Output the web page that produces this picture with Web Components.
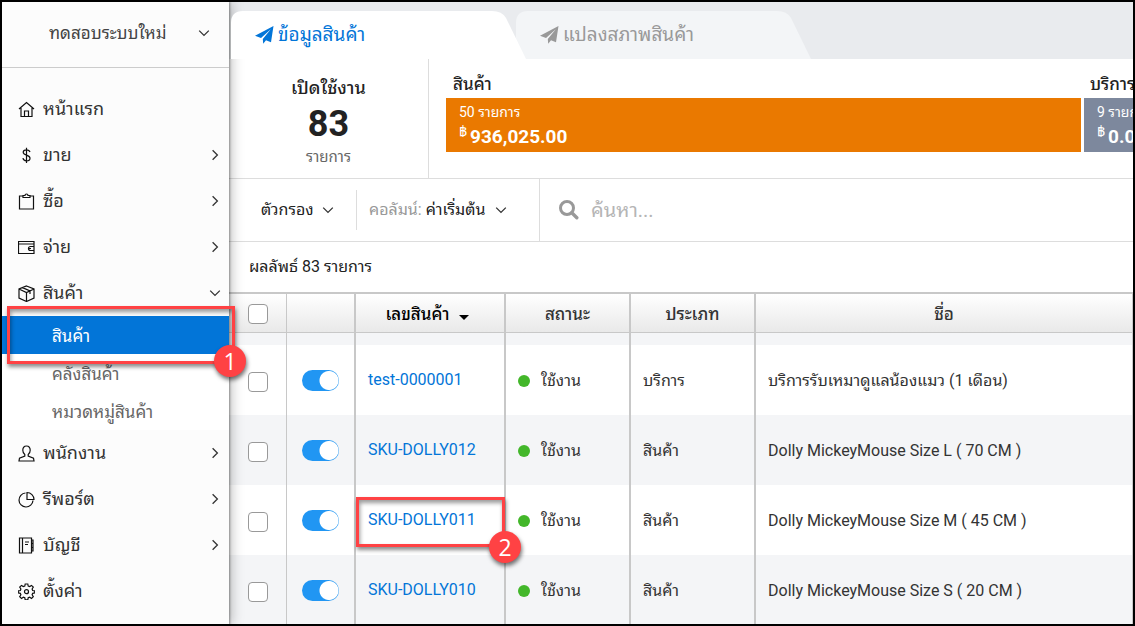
<!DOCTYPE html>
<html lang="th">
<head>
<meta charset="utf-8">
<title>ข้อมูลสินค้า</title>
<style>
html, body { margin: 0; }
body { font-family: Roboto, "Noto Sans Thai Looped", Loma, Waree, Tahoma, "Noto Sans Thai", sans-serif; font-size: 16px; line-height: 20px; color: #333; }
</style>
</head>
<body>
<product-app></product-app>
<script>
const define = (name, html, setup) => {
  const template = document.createElement('template');
  template.innerHTML = '<style>*{box-sizing:border-box}</style>' + html;
  customElements.define(name, class extends HTMLElement {
    connectedCallback() {
      if (this.shadowRoot) return;
      this.attachShadow({ mode: 'open' }).append(template.content.cloneNode(true));
      if (setup) setup(this, this.shadowRoot);
    }
  });
};

const ICONS = {
  home: '<path d="M1 8 8.500 1.500 16 8M3 7v8.500h11V7M6.500 15.500V10h4v5.500"/>',
  dollar: '<path d="M12 5C11.500 3.500 10.200 2.800 8.500 2.800 6.500 2.800 5.200 3.800 5.200 5.300 5.200 8.800 12 7.500 12 11.200 12 12.800 10.500 13.800 8.500 13.800 6.500 13.800 5.200 12.900 4.900 11.200M8.500 .8v15.200"/>',
  clipboard: '<path d="M5 3H1.500v13h14V3H12M5 4.500V2.500h2C7 .5 10 .5 10 2.500h2v2z"/>',
  wallet: '<path d="M.5 14.500v-12h15.500v12zM.5 5h15.500M16 7.500h-3.500a2 2 0 0 0-2 2h2.500M10.500 9.500a2 2 0 0 0 2 2H16"/>',
  box: '<path d="M8.500 1 16 4v9l-7.500 3.500L1 13V4zM1 4l7.500 3.500L16 4M8.500 7.500v9M4.500 2.600 12 6v3"/>',
  user: '<path d="M8.500 1C5.800 1 4.800 3 4.800 5.200c0 2 1 3.500 2 4.300v1.500L1.500 13.200 1 16h15l-.5-2.800-5.300-2.200V9.500c1-.8 2-2.300 2-4.300C12.200 3 11.200 1 8.500 1z"/>',
  pie: '<path d="M7.500 2a7 7 0 1 0 7.500 7.500M9 1.500a7 7 0 0 1 7 7H9z"/>',
  book: '<path d="M1.500 1h12v15h-12zM4.500 1v15M7 5h4M7 7.500h3M13.500 3H15v11h-1.500M13.500 6.500H15M13.500 10.500H15"/>',
  gear: '<path d="M7.200 1h2.600l.4 2 1.500.6 1.800-1.200 1.800 1.800-1.200 1.800.6 1.500 2 .4v2l-2 .4-.6 1.500 1.200 1.800-1.800 1.800-1.800-1.200-1.500.6-.4 2H7.200l-.4-2-1.500-.6-1.800 1.200-1.800-1.800 1.200-1.800-.6-1.500-2-.4v-2l2-.4.600-1.500L1.700 4.200l1.800-1.800 1.800 1.200 1.500-.6z"/><circle cx="8.500" cy="8.700" r="2"/>',
};

define('ui-icon', `
<style>:host{display:block;flex:none;width:17px;height:17px}svg{display:block;width:100%;height:100%;fill:none;stroke:#111;stroke-width:1.2}</style>
<svg viewBox="0 0 17 17" aria-hidden="true"></svg>`,
(host, root) => { root.querySelector('svg').innerHTML = ICONS[host.getAttribute('name')]; });

define('ui-chevron', `
<style>:host{display:block;flex:none;width:12px;height:12px}:host([dir=right]) svg{transform:rotate(-90deg)}svg{display:block;fill:none;stroke:#333;stroke-width:1.3}</style>
<svg width="12" height="12" viewBox="0 0 12 12" aria-hidden="true"><path d="M1.200 3.600 6 8.400l4.800-4.800"/></svg>`);

define('nav-item', `
<style>
:host{display:block}
a{display:flex;align-items:center;height:46px;padding:0 8px 0 16px;gap:8px;color:#333;text-decoration:none;font-size:18px;line-height:24px}
span{flex:1}
</style>
<a href="#"><span><slot></slot></span></a>`,
(host, root) => {
  const icon = document.createElement('ui-icon');
  icon.setAttribute('name', host.getAttribute('icon'));
  root.querySelector('a').prepend(icon);
  const arrow = host.getAttribute('arrow');
  if (arrow) {
    const c = document.createElement('ui-chevron');
    c.setAttribute('dir', arrow);
    root.querySelector('a').append(c);
  }
});

define('nav-subitem', `
<style>
:host{display:block}
a{display:block;height:38px;padding:10px 0 8px 50px;background:#fff;color:#666;text-decoration:none;font-size:17px;line-height:20px}
:host([active]) a{background:#0275d8;color:#fff}
</style>
<a href="#"><slot></slot></a>`);

define('side-nav', `
<style>
:host{display:block;position:relative;z-index:1;background:#fcfcfc;box-shadow:1px 0 2px rgba(0,0,0,.35),2px 0 12px rgba(0,0,0,.28)}
button{display:flex;align-items:center;justify-content:space-between;width:100%;height:66px;padding:0 19px 4px 47px;border:0;border-bottom:1px solid #ccc;background:none;font:inherit;font-size:17px;color:#444}
nav{padding-top:18px}
</style>
<button type="button"><span>ทดสอบระบบใหม่</span><ui-chevron></ui-chevron></button>
<nav>
<nav-item icon="home">หน้าแรก</nav-item>
<nav-item icon="dollar" arrow="right">ขาย</nav-item>
<nav-item icon="clipboard" arrow="right">ซื้อ</nav-item>
<nav-item icon="wallet" arrow="right">จ่าย</nav-item>
<nav-item icon="box" arrow="down">สินค้า</nav-item>
<nav-subitem active>สินค้า</nav-subitem>
<nav-subitem>คลังสินค้า</nav-subitem>
<nav-subitem>หมวดหมู่สินค้า</nav-subitem>
<nav-item icon="user" arrow="right">พนักงาน</nav-item>
<nav-item icon="pie" arrow="right">รีพอร์ต</nav-item>
<nav-item icon="book" arrow="right">บัญชี</nav-item>
<nav-item icon="gear">ตั้งค่า</nav-item>
</nav>`);

define('page-tab', `
<style>
:host{display:grid;width:295px;height:48px;margin-right:-10px;color:#999;--fill:#f3f5f7}
:host([active]){color:#0275d8;--fill:#fff;position:relative;z-index:1}
.shape,a{grid-area:1/1}
.shape{fill:var(--fill)}
a{z-index:1;display:flex;align-items:center;gap:4px;padding-left:24px;color:inherit;text-decoration:none;font-size:19px;line-height:24px}
a svg{fill:currentColor}
</style>
<svg class="shape" width="295" height="48" aria-hidden="true"><path d="M0 48V12Q0 0 12 0H261Q271 0 275 7L295 48z"/></svg>
<a href="#"><svg width="19" height="18" viewBox="0 0 19 18" aria-hidden="true"><path d="M18.500 0 16 16.300l-5-2.100-2.800 3.500-.4-4.800L15.800 3.200 6 12.100 0 9.700z"/></svg><slot></slot></a>`);

define('stat-bar', `
<style>
:host{display:block;min-width:0;overflow:hidden;white-space:nowrap}
h3{margin:0;padding:0 0 4px 7px;font-size:17px;line-height:20px;font-weight:500;color:#222}
:host([tone=gray]) h3{padding-left:6px}
.bar{height:54px;padding:4px 13px;background:#ea7900;color:#fff}
:host([tone=gray]) .bar{background:#7d889d}
.count{font-size:14px;line-height:20px}
.sum{display:flex;gap:3px;line-height:26px}
sup{font-size:14px;line-height:18px;vertical-align:top}
strong{font-size:19px;line-height:30px}
</style>
<h3></h3>
<div class="bar"><div class="count"></div><div class="sum"><sup>฿</sup><strong></strong></div></div>`,
(host, root) => {
  root.querySelector('h3').textContent = host.getAttribute('name');
  root.querySelector('.count').textContent = host.getAttribute('count');
  root.querySelector('strong').textContent = host.getAttribute('sum');
});

define('stats-panel', `
<style>
:host{display:flex;height:120px;border-bottom:1px solid #ddd;background:#fff}
.total{flex:none;width:200px;border-right:1px solid #ddd;padding-top:18px;text-align:center;color:#222}
.total div{font-size:18px;line-height:22px;font-weight:500}
.total strong{display:block;font-size:36px;line-height:50px}
.total small{display:block;font-size:15px;line-height:16px;color:#666}
.bars{flex:1;min-width:0;display:flex;gap:3px;padding:15px 0 0 17px}
.goods{flex:1}.service{flex:none;width:49px}
</style>
<div class="total"><div>เปิดใช้งาน</div><strong>83</strong><small>รายการ</small></div>
<div class="bars">
<stat-bar class="goods" name="สินค้า" count="50 รายการ" sum="936,025.00"></stat-bar>
<stat-bar class="service" tone="gray" name="บริการ" count="9 รายการ" sum="0.00"></stat-bar>
</div>`);

define('filter-bar', `
<style>
:host{display:flex;height:63px;border-bottom:1px solid #ddd;background:#fff}
.group{flex:none;display:flex;align-items:center;width:311px;border-right:1px solid #ddd;padding-left:32px}
button{display:flex;align-items:center;justify-content:space-between;height:40px;border:0;padding:0;background:none;font:inherit;color:#222}
.filter{width:96px;padding-right:22px;border-right:1px solid #ddd}
.columns{width:138px;margin-left:12px}
em{font-style:normal;color:#999}
label{flex:1;display:flex;align-items:center;gap:12px;padding-left:19px}
input{flex:1;min-width:0;border:0;outline:0;padding:0;background:none;font:inherit;font-size:20px;line-height:28px;height:28px;color:#333}
input::placeholder{color:#b5b5b5;opacity:1}
</style>
<div class="group">
<button class="filter" type="button"><span>ตัวกรอง</span><ui-chevron></ui-chevron></button>
<button class="columns" type="button"><span><em>คอลัมน์:</em> ค่าเริ่มต้น</span><ui-chevron></ui-chevron></button>
</div>
<label><svg width="20" height="20" viewBox="0 0 20 20" fill="none" stroke="#999" aria-hidden="true"><circle cx="8" cy="8" r="6.500" stroke-width="3"/><path d="m12.800 12.800 5 5" stroke-width="3.400" stroke-linecap="round"/></svg><input type="search" placeholder="ค้นหา..." aria-label="ค้นหา"></label>`);

define('toggle-switch', `
<style>
:host{display:block;width:37px;height:21px}
input{appearance:none;display:block;width:37px;height:21px;margin:0;border-radius:11px;background:radial-gradient(circle at 27px 50%,#fff 9px,transparent 10px) #2196f3}
</style><input type="checkbox" role="switch" checked aria-label="เปิดใช้งาน">`);

const ROWS = [
  ['test-0000001', 'บริการ', 'บริการรับเหมาดูแลน้องแมว (1 เดือน)'],
  ['SKU-DOLLY012', 'สินค้า', 'Dolly MickeyMouse Size L ( 70 CM )'],
  ['SKU-DOLLY011', 'สินค้า', 'Dolly MickeyMouse Size M ( 45 CM )'],
  ['SKU-DOLLY010', 'สินค้า', 'Dolly MickeyMouse Size S ( 20 CM )'],
];

define('product-table', `
<style>
:host{display:block;background:#fff}
p{margin:0;padding:15px 20px;line-height:20px;color:#222}
table{width:100%;table-layout:fixed;border-collapse:separate;border-spacing:0;border-top:2px solid #c8c8c8}
.c1{width:58px}.c2{width:69px}.c3{width:150px}.c4,.c5{width:125px}
th{height:39px;padding:2px 0 0;border-bottom:1px solid #c8c8c8;background:linear-gradient(#fff,#e9e9e9);font-size:17px;font-weight:500;color:#333}
th,td{border-right:2px solid #c8c8c8}
tr>:first-child,tr>:last-child{border-right-width:1px}
td{height:70px;padding:2px 12px 0;text-align:left}
tr.past td{height:12px}
tbody tr:nth-child(odd) td{background:#f4f5f7}
input{appearance:none;display:block;width:20px;height:20px;margin:0 0 0 19px;border:1px solid #999;border-radius:4px;background:#fff}
td:first-child{padding:4px 0 0}
td:nth-child(2){padding:0 0 0 15px}
td:nth-child(3){padding-top:0}
td a{color:#0275d8;text-decoration:none}
.sort{display:flex;align-items:center;justify-content:center;gap:9px;width:100%;border:0;padding:0 6px 0 0;background:none;font:inherit;color:#000}
.sort i{margin-top:6px;border:5px solid transparent;border-top-color:#000;border-bottom:0}
.status{display:flex;align-items:center;gap:11px}
.status i{width:12px;height:12px;border-radius:50%;background:#43b72a}
</style>
<p>ผลลัพธ์ 83 รายการ</p>
<table>
<colgroup><col class="c1"><col class="c2"><col class="c3"><col class="c4"><col class="c5"><col></colgroup>
<thead><tr><th><input type="checkbox" aria-label="เลือกทั้งหมด"></th><th></th><th><button class="sort" type="button">เลขสินค้า<i></i></button></th><th>สถานะ</th><th>ประเภท</th><th>ชื่อ</th></tr></thead>
<tbody><tr class="past"><td></td><td></td><td></td><td></td><td></td><td></td></tr></tbody>
</table>`,
(host, root) => {
  root.querySelector('tbody').insertAdjacentHTML('beforeend', ROWS.map(([sku, type, name]) => `
<tr><td><input type="checkbox" aria-label="${sku}"></td><td><toggle-switch></toggle-switch></td><td><a href="#">${sku}</a></td><td><div class="status"><i></i>ใช้งาน</div></td><td>${type}</td><td>${name}</td></tr>`).join(''));
});

define('step-marker', `
<style>
:host{position:absolute;z-index:2;box-sizing:border-box;border:3px solid #ff4244;box-shadow:1px 3px 4px rgba(0,0,0,.45),inset 1px 3px 4px rgba(0,0,0,.4);pointer-events:none}
b{position:absolute;right:var(--badge-x);bottom:var(--badge-y);width:32px;height:32px;border-radius:50%;background:#ff4244;box-shadow:1px 3px 4px rgba(0,0,0,.55);color:#fff;font-size:23px;line-height:32px;font-weight:400;text-align:center;font-family:"Open Sans",sans-serif}
</style><b><slot></slot></b>`);

define('product-app', `
<style>
:host{position:relative;display:grid;grid-template-columns:227px minmax(0,1fr);height:100vh;border:2px solid #000;overflow:hidden;box-sizing:border-box}
main{min-width:0}
.tabs{display:flex;height:57px;padding:9px 0 0 2px;background:#e9ebee}
.one{left:5px;top:304px;width:228px;height:58px;--badge-x:-14px;--badge-y:-16px}
.two{left:354px;top:495px;width:149px;height:50px;--badge-x:-19px;--badge-y:-19px}
</style>
<side-nav></side-nav>
<main>
<div class="tabs"><page-tab active>ข้อมูลสินค้า</page-tab><page-tab>แปลงสภาพสินค้า</page-tab></div>
<stats-panel></stats-panel>
<filter-bar></filter-bar>
<product-table></product-table>
</main>
<step-marker class="one">1</step-marker>
<step-marker class="two">2</step-marker>`);
</script>
</body>
</html>
